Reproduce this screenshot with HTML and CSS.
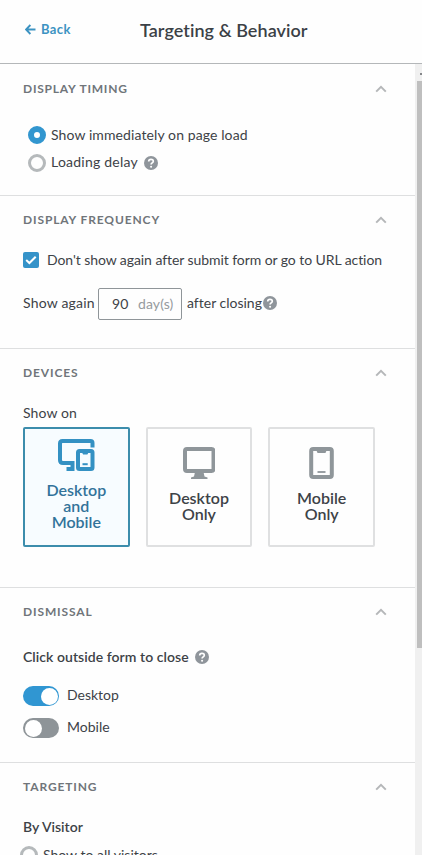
FILE: index.html
```
<!DOCTYPE html>
<html lang="en">
<head>
<meta charset="utf-8">
<title>Targeting &amp; Behavior</title>
<link rel="stylesheet" href="styles.css">
</head>
<body>
<svg class="defs" aria-hidden="true">
  <symbol id="chevron" viewBox="0 0 12 8"><path d="M1.200 6.600 6 1.800l4.800 4.800" fill="none" stroke="currentColor" stroke-width="2"/></symbol>
  <symbol id="help" viewBox="0 0 14 14"><circle cx="7" cy="7" r="7" fill="#8f959b"/><path d="M4.700 5.500C4.700 2.600 9.300 2.600 9.300 5.300 9.300 6.900 7.100 6.900 7.100 8.500" fill="none" stroke="#fff" stroke-width="1.700"/><circle cx="7.100" cy="10.700" r="1.050" fill="#fff"/></symbol>
</svg>
<header class="header">
  <a class="back"><svg width="11" height="11" viewBox="0 0 11 11"><path d="M10.500 5.500H1.500M5.400 1 1 5.500l4.400 4.500" fill="none" stroke="currentColor" stroke-width="1.900"/></svg>Back</a>
  <h1 class="title">Targeting &amp; Behavior</h1>
</header>
<div class="body">
  <main class="content">
    <section class="section timing">
      <div class="section-head"><h2>DISPLAY TIMING</h2><svg class="chevron"><use href="#chevron"/></svg></div>
      <div class="options">
        <label class="option"><span class="radio checked"></span><span class="option-text wide">Show immediately on page load</span></label>
        <label class="option"><span class="radio"></span><span class="option-text delay">Loading delay</span><svg class="help"><use href="#help"/></svg></label>
      </div>
    </section>
    <section class="section frequency">
      <div class="section-head"><h2>DISPLAY FREQUENCY</h2><svg class="chevron"><use href="#chevron"/></svg></div>
      <label class="check-row"><span class="checkbox"><svg width="12" height="10" viewBox="0 0 12 10"><path d="M1.200 5 4.400 8l6.300-6.300" fill="none" stroke="#fff" stroke-width="2"/></svg></span><span class="check-text">Don't show again after submit form or go to URL action</span></label>
      <div class="again-row"><span class="again">Show again</span><span class="days"><span class="value">90</span><span class="unit">day(s)</span></span><span class="after">after closing</span><svg class="help"><use href="#help"/></svg></div>
    </section>
    <section class="section devices">
      <div class="section-head"><h2>DEVICES</h2><svg class="chevron"><use href="#chevron"/></svg></div>
      <div class="show-on">Show on</div>
      <div class="cards">
        <div class="card selected">
          <svg width="37" height="32" viewBox="0 0 37 32"><path d="M34.500 8.500V4Q34.500 2 32.500 2H4.500Q2 2 2 4.500V21Q2 24 5 24H14.500V30H8.500" fill="none" stroke="currentColor" stroke-width="4"/><path fill-rule="evenodd" d="M21.500 10h11.500q3.500 0 3.500 3.500v15q0 3.500-3.500 3.500h-11.500q-3.500 0-3.500-3.500v-15q0-3.500 3.500-3.500zM22 14v14h10.500V14h-2.300l-.8 1.600h-4.300l-.8-1.600z" fill="currentColor"/><path d="M24.500 25.200h5.200" stroke="currentColor" stroke-width="2"/></svg>
          <span class="card-label">Desktop<br>and<br>Mobile</span>
        </div>
        <div class="card">
          <svg width="32" height="32" viewBox="0 0 32 32"><rect x="2" y="2" width="28.500" height="22" rx="2" fill="none" stroke="currentColor" stroke-width="4"/><path d="M12 25h8.500l1 4.500 3 1V32H8v-1.500l3-1z" fill="currentColor"/></svg>
          <span class="card-label">Desktop<br>Only</span>
        </div>
        <div class="card">
          <svg width="25" height="32" viewBox="0 0 25 32"><rect x="2.200" y="2" width="20.600" height="28" rx="2" fill="none" stroke="currentColor" stroke-width="4"/><path d="M7.500 3.500h10L16.500 6h-8z" fill="currentColor"/><path d="M8.500 25h8" stroke="currentColor" stroke-width="1.800"/></svg>
          <span class="card-label">Mobile<br>Only</span>
        </div>
      </div>
    </section>
    <section class="section dismissal">
      <div class="section-head"><h2>DISMISSAL</h2><svg class="chevron"><use href="#chevron"/></svg></div>
      <div class="subtitle"><span class="subtitle-text">Click outside form to close</span><svg class="help"><use href="#help"/></svg></div>
      <label class="switch-row"><span class="switch on"></span><span class="switch-text">Desktop</span></label>
      <label class="switch-row"><span class="switch"></span><span class="switch-text">Mobile</span></label>
    </section>
    <section class="section targeting">
      <div class="section-head"><h2>TARGETING</h2><svg class="chevron"><use href="#chevron"/></svg></div>
      <div class="subtitle visitor">By Visitor</div>
      <label class="option visitors"><span class="radio"></span><span class="option-text">Show to all visitors</span></label>
    </section>
  </main>
  <div class="scrollbar"><span class="arrow"></span><span class="thumb"></span></div>
</div>
</body>
</html>
```
FILE: styles.css
```
* { box-sizing: border-box; }
body {
  margin: 0;
  height: 855px;
  overflow: hidden;
  background: #fefefe;
  color: #3d4247;
  font: 14px/20px Lato, "Liberation Sans", sans-serif;
  font-variant-ligatures: none;
  white-space: nowrap;
}
h1, h2 { margin: 0; }
svg { display: block; flex: none; }
.defs { display: none; }

.header {
  display: flex;
  align-items: center;
  height: 64px;
  padding: 0 0 4px 25px;
  border-bottom: 1px solid #b4b7b9;
}
.back {
  display: flex;
  align-items: center;
  gap: 5px;
  width: 115px;
  padding-bottom: 1px;
  color: #3c93c2;
  font-size: 13px;
  font-weight: 700;
  letter-spacing: 0.4px;
}
.title { color: #3b4146; font-size: 18px; font-weight: 600; letter-spacing: 0.06px; }

.body { display: flex; height: 791px; }
.content { width: 415px; overflow: hidden; }
.section { border-bottom: 1px solid #dedfe0; padding: 14px 28px 0 23px; }
.timing { height: 132px; padding-top: 15px; }
.frequency { height: 153px; }
.devices { height: 239px; }
.dismissal { height: 175px; }
.targeting { height: 175px; }
.section-head { display: flex; align-items: center; justify-content: space-between; height: 20px; }
h2 { color: #70757a; font-size: 12px; font-weight: 700; letter-spacing: 0.87px; }
.timing h2 { letter-spacing: 0.78px; }
.chevron { width: 12px; height: 8px; color: #b5b7b9; }
.help { width: 14px; height: 14px; }

.options { margin: 22px 0 0 5px; }
.option { display: flex; align-items: center; height: 28px; }
.radio {
  width: 18px;
  height: 18px;
  margin-right: 5px;
  border: 3px solid #b5b9bb;
  border-radius: 50%;
}
.radio.checked { border: 6.500px solid #3296cf; background: #fff; }
.option-text { padding-bottom: 1px; }
.wide { letter-spacing: 0.1px; }
.delay { margin-right: 6px; padding-bottom: 2px; letter-spacing: 0.23px; }

.check-row { display: flex; align-items: center; height: 28px; margin-top: 16px; }
.checkbox {
  display: flex;
  align-items: center;
  justify-content: center;
  width: 16px;
  height: 16px;
  margin-right: 8px;
  border-radius: 2px;
  background: #3593c9;
}
.check-text { letter-spacing: -0.07px; }
.again-row { display: flex; align-items: center; height: 32px; margin-top: 14px; }
.again { width: 75px; padding-bottom: 2px; letter-spacing: 0.2px; }
.days {
  display: flex;
  align-items: center;
  width: 84px;
  height: 32px;
  padding-left: 13px;
  border: 1px solid #8f9599;
  border-radius: 2px;
}
.value { width: 26px; letter-spacing: 0.2px; }
.unit { color: #969b9f; letter-spacing: 0.1px; }
.after { width: 76px; margin-left: 5px; padding-bottom: 2px; }
.after + .help { margin-bottom: 2px; }

.show-on { margin-top: 20px; letter-spacing: 0.1px; }
.cards { display: grid; grid-template-columns: repeat(3, 1fr); gap: 16px; width: 352px; margin-top: 4px; }
.card {
  display: flex;
  flex-direction: column;
  align-items: center;
  justify-content: center;
  gap: 11px;
  height: 120px;
  padding-bottom: 6px;
  border: 2px solid #dfe0e1;
  border-radius: 2px;
  color: #8f969a;
}
.card.selected { border-color: #3c8dac; background: #f7fcff; color: #3491c3; }
.card-label { color: #3d4247; font-size: 16px; line-height: 16px; font-weight: 600; text-align: center; }
.selected .card-label { color: #32739a; }

.subtitle { display: flex; align-items: center; gap: 6px; height: 20px; margin: 25px 0 19px; font-weight: 600; }
.subtitle-text { letter-spacing: 0.05px; }
.switch-row { display: flex; align-items: center; height: 20px; margin-bottom: 12px; }
.switch {
  display: flex;
  width: 36px;
  height: 20px;
  margin-right: 8px;
  padding: 1.500px;
  border-radius: 10px;
  background: #8e9498;
}
.switch::before { content: ""; width: 17px; height: 17px; border-radius: 50%; background: #fff; }
.switch.on { justify-content: flex-end; background: #3096d2; }
.switch-text { padding-bottom: 3px; }

.subtitle.visitor { margin: 20px 0 4px; }
.option.visitors { margin-left: -3px; }

.scrollbar { display: flex; flex-direction: column; align-items: flex-end; width: 7px; background: #f0f0f0; }
.arrow { width: 2px; height: 2px; margin: 9px 0 6px; background: #85878a; }
.thumb { width: 5px; height: 567px; background: #bfbfbf; }
```
